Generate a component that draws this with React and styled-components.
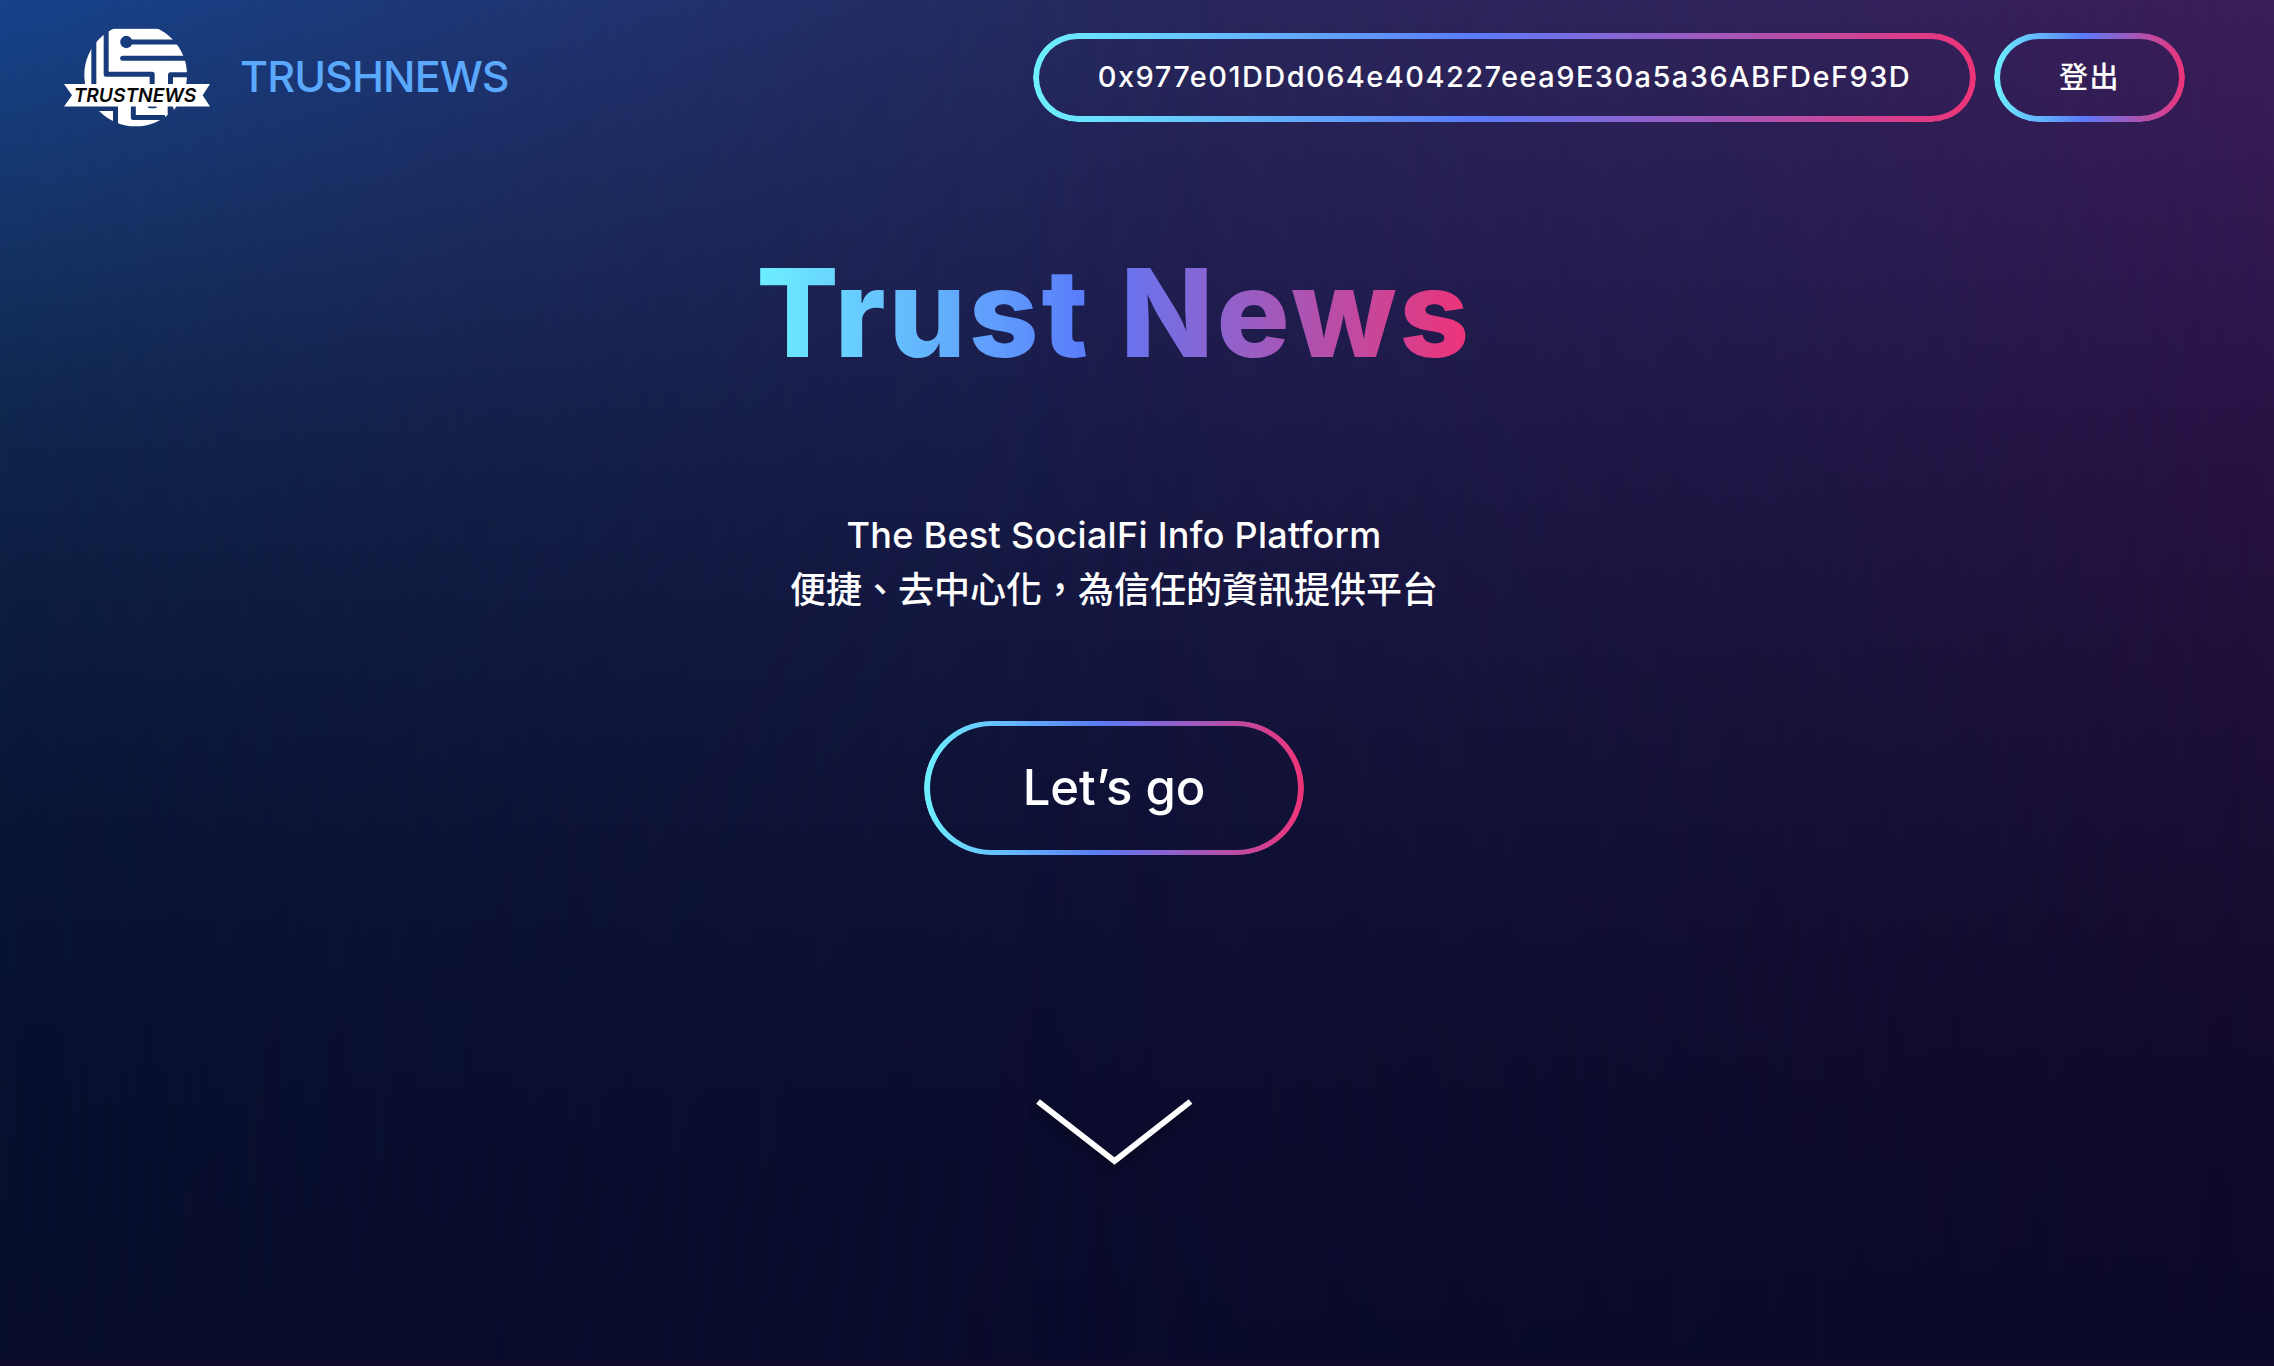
import React from "react";
import styled, { createGlobalStyle, css } from "styled-components";

const SPECTRUM = "linear-gradient(90deg, #6df0ff 0%, #5a7bfb 46.5%, #ef3377 100%)";
const LATIN = '"Inter", "Noto Sans CJK TC", sans-serif';
const HAN = '"Noto Sans CJK TC", "Inter", sans-serif';

const GlobalStyle = createGlobalStyle`
  *, *::before, *::after { box-sizing: border-box; }
  body { margin: 0; background: #10092c; color: #fff; font-family: ${LATIN}; }
`;

const Page = styled.div`
  height: 1366px;
  padding-bottom: 7px;
  overflow: hidden;
`;

const glow = css`
  content: "";
  position: absolute;
  inset: 0;
  z-index: -1;
`;

const Hero = styled.div`
  position: relative;
  z-index: 0;
  display: flex;
  flex-direction: column;
  height: 1359px;
  background: linear-gradient(180deg, #27285c 0, #1f1f50 270px, #181a46 480px, #12143b 720px, #0e1034 900px, #0c0d2f 1120px, #0a0c2c 1359px);

  &::before {
    ${glow}
    background: linear-gradient(180deg, #16438b 0, #15366b 200px, #0f274f 400px, #0c1d40 600px, #091537 800px, #07102f 1050px, #080f2c 1359px);
    mask-image: linear-gradient(94deg, #000 0%, rgba(0, 0, 0, 0.52) 20%, rgba(0, 0, 0, 0.22) 36%, transparent 52%);
  }

  &::after {
    ${glow}
    background: linear-gradient(180deg, #3b1d59 0, #361b54 120px, #2d164c 300px, #261140 500px, #1e0f38 700px, #170c30 900px, #110a2b 1100px, #0b092a 1359px);
    mask-image: linear-gradient(90deg, transparent 45%, rgba(0, 0, 0, 0.45) 78%, #000 100%);
  }
`;

const Header = styled.header`
  display: flex;
  align-items: center;
  justify-content: space-between;
  height: 155px;
  padding: 0 89px 0 64px;
`;

const Brand = styled.div`
  display: flex;
  align-items: center;
  gap: 30px;
`;

const BrandName = styled.span`
  padding-bottom: 4px;
  font-size: 43px;
  font-weight: 500;
  line-height: 50px;
  letter-spacing: -0.9px;
  color: #5ba8ff;
`;

const LogoSvg = styled.svg`
  display: block;
  width: 146px;
  height: 99px;
`;

const Actions = styled.div`
  display: flex;
  gap: 18px;
`;

const Pill = styled.button`
  position: relative;
  display: flex;
  align-items: center;
  justify-content: center;
  width: ${(p) => p.$width}px;
  height: ${(p) => p.$height}px;
  padding: 0 0 ${(p) => p.$lift || 0}px;
  border: 0;
  background: none;
  color: #fff;
  font-family: ${(p) => (p.$han ? HAN : LATIN)};
  font-weight: 500;
  font-size: ${(p) => p.$size}px;
  letter-spacing: ${(p) => p.$tracking}px;
  white-space: nowrap;

  &::before {
    content: "";
    position: absolute;
    inset: 0;
    border: solid transparent;
    border-width: ${(p) => p.$edge};
    border-radius: 999px;
    background: ${SPECTRUM} border-box;
    mask: linear-gradient(#000 0 0) padding-box exclude, linear-gradient(#000 0 0) border-box;
  }
`;

const Content = styled.main`
  display: flex;
  flex-direction: column;
  align-items: center;
  width: 2228px;
`;

const Title = styled.h1`
  margin: 96px 0 0;
  font-size: 122px;
  font-weight: 800;
  line-height: 123px;
  letter-spacing: 2.77px;
  background: ${SPECTRUM};
  background-clip: text;
  color: transparent;
`;

const Tagline = styled.p`
  margin: 134px 0 0;
  font-size: 36px;
  font-weight: 500;
  line-height: 54px;
  letter-spacing: 0.28px;
`;

const HanTagline = styled.p`
  margin: -2px 0 107px;
  font-family: ${HAN};
  font-size: 36px;
  font-weight: 500;
  line-height: 54px;
`;

const ScrollHint = styled.svg`
  display: block;
  width: 170px;
  height: 90px;
  margin-top: 235px;
  filter: drop-shadow(0 5px 5px rgba(0, 0, 0, 0.4));
`;

const RibbonText = styled.text`
  font-family: "Inter", sans-serif;
  font-size: 58px;
  font-style: italic;
  font-weight: 600;
  fill: #050505;
`;

function Logo() {
  return (
    <LogoSvg viewBox="43 54 438 297" aria-label="TrustNews">
      <defs>
        <mask id="circuit" maskUnits="userSpaceOnUse" x="43" y="54" width="438" height="297">
          <circle cx="258" cy="195" r="154" fill="#fff" />
          <g fill="none" stroke="#000" strokeWidth="15" strokeLinejoin="round">
            <path d="M132.500 90V222" />
            <path d="M169.500 50V193H307.500V224" />
            <path d="M362.500 224V194H420" />
            <path d="M230 96H400" />
            <path d="M219 145H420" strokeLinecap="round" />
            <path d="M197.500 286V351" />
            <path d="M251 286V322.500H346" />
          </g>
          <circle cx="230" cy="96" r="18.500" />
          <rect x="43" y="54" width="438" height="2.500" />
          <rect x="100" y="286" width="92" height="17" />
          <rect x="354" y="286" width="60" height="60" />
          <ellipse cx="308" cy="291" rx="14" ry="4" />
        </mask>
      </defs>
      <rect x="43" y="54" width="438" height="297" fill="#fff" mask="url(#circuit)" />
      <path d="M43 222H481L459 256L481 289.500H43L67 256Z" fill="#fff" />
      <path d="M369 288H381L373 300Z" fill="#fff" />
      <RibbonText x="72" y="277" textLength="368" lengthAdjust="spacingAndGlyphs">
        TRUSTNEWS
      </RibbonText>
    </LogoSvg>
  );
}

export default function App() {
  return (
    <>
      <GlobalStyle />
      <Page lang="zh-Hant">
        <Hero>
          <Header>
            <Brand>
              <Logo />
              <BrandName>TRUSHNEWS</BrandName>
            </Brand>
            <Actions>
              <Pill $width={943} $height={89} $edge="6px" $size={29} $tracking={1.438} $lift={2}>
                0x977e01DDd064e404227eea9E30a5a36ABFDeF93D
              </Pill>
              <Pill $width={191} $height={89} $edge="6px" $size={29} $tracking={1.5} $lift={6} $han>
                登出
              </Pill>
            </Actions>
          </Header>
          <Content>
            <Title>Trust News</Title>
            <Tagline>The Best SocialFi Info Platform</Tagline>
            <HanTagline>便捷、去中心化，為信任的資訊提供平台</HanTagline>
            <Pill $width={380} $height={134} $edge="5px 6px" $size={49} $tracking={0} $lift={1}>
              Let’s go
            </Pill>
            <ScrollHint viewBox="0 0 170 90">
              <path d="M9 11.500L85.500 71L161.500 11.500" fill="none" stroke="#fff" strokeWidth="6" />
            </ScrollHint>
          </Content>
        </Hero>
      </Page>
    </>
  );
}
